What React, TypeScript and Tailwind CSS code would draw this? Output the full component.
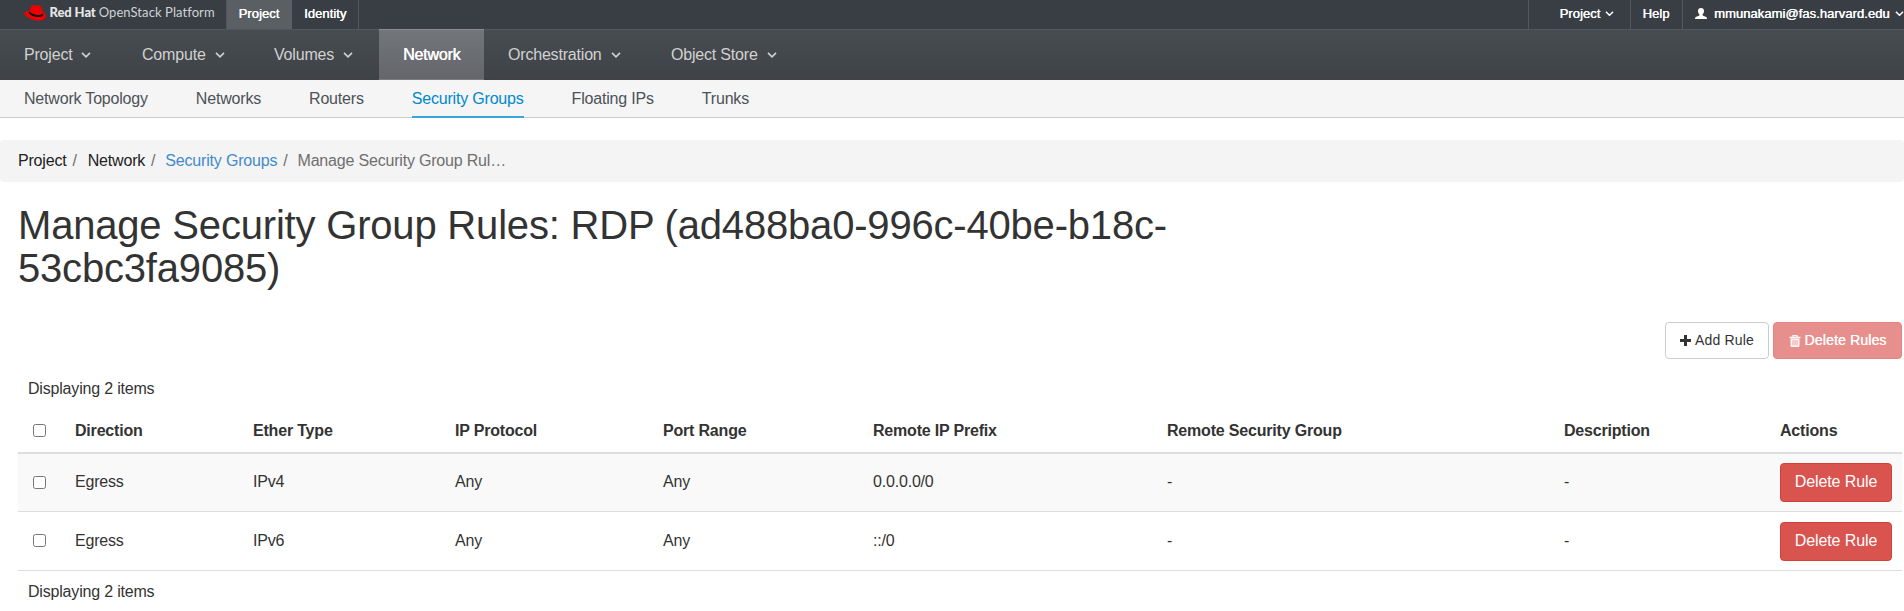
import React from "react";

function Chevron({ className = "", size = 10 }: { className?: string; size?: number }) {
  return (
    <svg className={className} width={size} height={size * 0.6} viewBox="0 0 10 6" fill="none" stroke="currentColor" strokeWidth="1.6">
      <path d="M1 0.9 5 4.8 9 0.9" />
    </svg>
  );
}

function HatLogo() {
  return (
    <svg width="24" height="18" viewBox="0 0 24 18" className="shrink-0">
      <path
        fill="#e00"
        d="M5.6 8.2C6.2 5.2 7 1.6 8.2 1.1c1.2-.4 2.600.6 3.900.6 1.200 0 2-.9 3.300-.4 1.900.7 3.100 4.200 3.500 7.200 2.200.9 3.500 2.200 3.200 4.100-.4 2.600-3.300 4.100-7.100 4.100C9.400 16.700.2 12.800.3 9.300c0-1.600 2.100-2.300 4.500-2.300z"
      />
      <path fill="#111" d="M5.300 7.200c1.600 2.300 5.500 3.900 9.100 3.900 2.100 0 3.800-.6 4.400-1.800l.4 1.700c-.6 1.500-2.500 2.100-4.900 2.100-4.500 0-9.300-2.200-9.400-4.500z" />
    </svg>
  );
}

function UserIcon() {
  return (
    <svg width="12" height="11" viewBox="0 0 12 11" fill="currentColor" className="shrink-0">
      <path d="M6 0c1.900 0 3 1.200 3 3 0 1.500-.6 2.700-1.500 3.400v.9c.5.600 3.300 1.100 4 2 .3.400.5 1.100.5 1.700H0c0-.6.2-1.300.5-1.700.7-.9 3.500-1.400 4-2v-.9C3.600 5.700 3 4.500 3 3c0-1.800 1.100-3 3-3z" />
    </svg>
  );
}

function PlusIcon() {
  return (
    <svg width="11" height="11" viewBox="0 0 11 11" fill="currentColor">
      <path d="M4 0h3v4h4v3H7v4H4V7H0V4h4z" />
    </svg>
  );
}

function TrashIcon() {
  return (
    <svg width="12" height="12" viewBox="0 0 12 12" fill="none" stroke="currentColor">
      <path d="M0.500 2.500h11" strokeWidth="1.600" />
      <path d="M4 2V.7h4V2" strokeWidth="1.200" />
      <path d="M1.500 3.500h9V11q0 1-1 1h-7q-1 0-1-1z" fill="currentColor" stroke="none" />
      <path d="M4 5v5.300M6 5v5.300M8 5v5.300" stroke="#e78f8c" strokeWidth=".8" />
    </svg>
  );
}

function Check() {
  return (
    <input
      type="checkbox"
      className="block h-[13px] w-[13px] appearance-none rounded-[2.500px] border border-[#767676] bg-white"
    />
  );
}

const menu = [
  { label: "Project", width: "w-[118px]" },
  { label: "Compute", width: "w-[132px]" },
  { label: "Volumes", width: "w-[129px]" },
  { label: "Network", width: "w-[105px]", active: true },
  { label: "Orchestration", width: "w-[163px]" },
  { label: "Object Store", width: "w-[160px]" },
];

const subMenu = [
  { label: "Network Topology" },
  { label: "Networks" },
  { label: "Routers" },
  { label: "Security Groups", active: true },
  { label: "Floating IPs" },
  { label: "Trunks" },
];

const columns = ["Direction", "Ether Type", "IP Protocol", "Port Range", "Remote IP Prefix", "Remote Security Group", "Description", "Actions"];

const rules = [
  { row: "h-[58px] bg-[#f9f9f9]", action: "pt-[9px]", values: ["Egress", "IPv4", "Any", "Any", "0.0.0.0/0", "-", "-"] },
  { row: "h-[59px]", action: "pt-[10px]", values: ["Egress", "IPv6", "Any", "Any", "::/0", "-", "-"] },
];

export default function App() {
  return (
    <div className="h-[611px] overflow-hidden bg-white font-['Liberation_Sans',Arial,sans-serif] text-[16px] leading-[23px] tracking-[-0.190px] text-[#333]">
      <header className="flex h-[29px] overflow-hidden bg-[#393d44] text-[13px] leading-[27px] tracking-[0.050px] text-white [text-shadow:0.400px_0_0_#fff]">
        <div className="flex h-[25px] w-[226px] shrink-0 items-center pl-6 [text-shadow:none]">
          <HatLogo />
          <span className="ml-[1.500px] font-['Lato',sans-serif] text-[13px] font-black tracking-[-0.100px] whitespace-nowrap text-[#e6e7e8]">Red Hat</span>
          <span className="ml-[3px] font-['Lato',sans-serif] text-[13px] font-normal tracking-[0.080px] whitespace-nowrap text-[#d0d2d4]">OpenStack Platform</span>
        </div>
        <nav className="flex">
          <a className="w-[66px] border-l border-[#53565b] bg-[#5a5f63] pl-[11.500px]">Project</a>
          <a className="w-[67px] border-r border-[#53565b] pl-3">Identity</a>
        </nav>
        <div className="ml-auto flex">
          <a className="flex w-[102px] items-center border-l border-[#53565b] pb-[2px] pl-[30.500px]">
            Project <Chevron size={9} className="ml-[5px]" />
          </a>
          <a className="w-[52px] border-l border-[#53565b] pl-[11.500px]">Help</a>
          <a className="flex w-[222px] items-center border-l border-[#53565b] pb-[2px] pl-3 whitespace-nowrap">
            <UserIcon />
            <span className="ml-[7px]">mmunakami@fas.harvard.edu</span>
            <Chevron size={9} className="ml-[5px] shrink-0" />
          </a>
        </div>
      </header>

      <nav className="flex h-[51px] border-t border-[#53575b] bg-gradient-to-b from-[#474c50] to-[#3f4347] text-[#d1d1d1]">
        {menu.map((m) => (
          <a
            key={m.label}
            className={
              m.active
                ? `${m.width} -mt-px h-[51px] border-y border-t-[#8a8c92] border-b-[#7a7c82] bg-gradient-to-b from-[#72757a] to-[#64666c] pl-6 leading-[50px] text-white [text-shadow:0.400px_0_0_#fff]`
                : `${m.width} flex items-center pb-[2px] pl-6`
            }
          >
            {m.label}
            {!m.active && <Chevron className="mt-[2px] ml-[9px]" />}
          </a>
        ))}
      </nav>

      <nav className="flex h-[38px] gap-12 border-b border-[#ccc] bg-[#f5f5f5] pl-6 leading-[38px] text-[#4d5258]">
        {subMenu.map((s) => (
          <a key={s.label} className={s.active ? "h-[38px] border-b-2 border-[#39a5dc] text-[#0088ce]" : "h-[37px]"}>
            {s.label}
          </a>
        ))}
      </nav>

      <ol className="mt-[22px] flex h-[42px] rounded bg-[#f4f4f4] pl-[18px] leading-[41px] text-[#6f6f6f]">
        <li className="text-[#222]">Project</li>
        <li className="mr-[11px] ml-[6px]">/</li>
        <li className="text-[#222]">Network</li>
        <li className="mr-[10px] ml-[6px]">/</li>
        <li className="text-[#428bca]">Security Groups</li>
        <li className="mr-[10px] ml-[6px]">/</li>
        <li>Manage Security Group Rul…</li>
      </ol>

      <main className="pr-[2px] pl-[18px]">
        <h1 className="mt-[22px] w-[1240px] text-[40px] leading-[43px]">
          Manage Security Group Rules: RDP (ad488ba0-996c-40be-b18c-
          <br />
          53cbc3fa9085)
        </h1>

        <div className="mt-8 flex h-[37px] justify-end gap-1 text-[14px] tracking-[0.150px]">
          <button className="flex w-[104px] items-center justify-center gap-1 rounded border border-[#ccc]">
            <PlusIcon />
            Add Rule
          </button>
          <button className="flex w-[129px] items-center justify-center gap-1 rounded border border-[#e68380] bg-[#e78f8c] text-white/90 [text-shadow:0.300px_0_0_#fff]">
            <TrashIcon />
            Delete Rules
          </button>
        </div>

        <table className="w-full table-fixed border-separate border-spacing-0 text-left">
          <caption className="h-[50px] pt-[18px] pl-[10px] text-left">Displaying 2 items</caption>
          <colgroup>
            <col className="w-[47px]" />
            <col className="w-[178px]" />
            <col className="w-[202px]" />
            <col className="w-[208px]" />
            <col className="w-[210px]" />
            <col className="w-[294px]" />
            <col className="w-[397px]" />
            <col className="w-[216px]" />
            <col />
          </colgroup>
          <thead>
            <tr className="h-[45px]">
              <th className="border-b-2 border-[#ddd] pl-[15px]">
                <Check />
              </th>
              {columns.map((c) => (
                <th key={c} className="border-b-2 border-[#ddd] pl-[10px]">
                  {c}
                </th>
              ))}
            </tr>
          </thead>
          <tbody>
            {rules.map((r, i) => (
              <tr key={i} className={r.row}>
                <td className="border-b border-[#ddd] pb-px pl-[15px]">
                  <Check />
                </td>
                {r.values.map((v, j) => (
                  <td key={j} className="border-b border-[#ddd] pb-[2px] pl-[10px]">
                    {v}
                  </td>
                ))}
                <td className={`border-b border-[#ddd] pl-[10px] align-top ${r.action}`}>
                  <button className="block h-[39px] w-[112px] rounded border border-[#d43f3a] bg-[#d9534f] pb-[2px] tracking-[-0.100px] text-white">Delete Rule</button>
                </td>
              </tr>
            ))}
          </tbody>
        </table>
        <div className="pt-[9px] pl-[10px]">Displaying 2 items</div>
      </main>
    </div>
  );
}
